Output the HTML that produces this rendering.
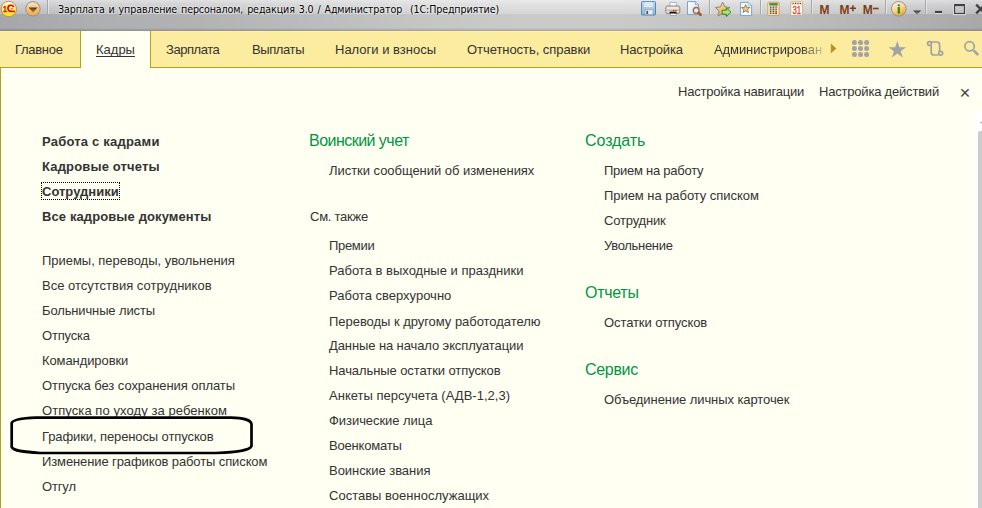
<!DOCTYPE html>
<html lang="ru"><head><meta charset="utf-8"><title>1С:Предприятие</title>
<style>
html,body{margin:0;padding:0;}
body{width:982px;height:508px;overflow:hidden;position:relative;background:#fffff2;font-family:"Liberation Sans",Arial,sans-serif;color:#333;}
.abs{position:absolute;white-space:nowrap;}
#title{left:0;top:0;width:982px;height:31px;background:linear-gradient(rgba(0,0,0,0) 0,rgba(0,0,0,0) 28px,rgba(10,10,30,.1) 29.5px,rgba(10,10,30,.22) 31px),linear-gradient(90deg,#a6a7ab 0,#aeafb1 10%,#b2b2b5 19%,#babbbc 31%,#c5c5c6 43%,#cacaca 53%,#cacaca 63%,#c1c1c1 76%,#b4b4b6 90%,#a8a8ab 100%);}
#gloss{left:0;top:0;width:982px;height:14px;background:linear-gradient(rgba(255,255,255,.6) 0,rgba(255,255,255,.42) 5px,rgba(255,255,255,.24) 14px);}
#ttext{left:58px;top:2px;word-spacing:1px;letter-spacing:-0.11px;font-family:"DejaVu Sans Condensed","Liberation Sans",sans-serif;font-size:10.6px;line-height:15px;color:#000;text-shadow:0 0 3px rgba(255,255,255,.9),0 0 2px rgba(255,255,255,.8);}
#nav{left:0;top:31px;width:982px;height:36px;background:linear-gradient(#fff2a4 0,#fff2a4 1px,#fcec9f 1px);border-bottom:1px solid #b9a019;}
.nv{font-size:13px;line-height:20px;color:#333;}
.u{text-decoration:underline;text-decoration-skip-ink:none;text-underline-offset:2px;text-decoration-thickness:1px;}
#tab{left:80px;top:31px;width:71px;height:37px;background:#fffff2;border-left:1px solid #b9a019;border-right:1px solid #b9a019;box-sizing:border-box;}
#lb{left:0;top:68px;width:1px;height:440px;background:#b9a019;border-right:1px solid #fff;}
#wl{left:1px;top:68px;width:973px;height:1px;background:#fffffa;}
.t{font-size:13px;line-height:20px;}
.b{font-weight:bold;font-size:13px;line-height:20px;}
.h{font-size:16px;line-height:20px;color:#009646;}
#focus{left:41px;top:182px;width:77px;height:16px;border:1px dotted #000;}
#sbw{left:974px;top:111px;width:8px;height:397px;background:#fff;}
#sbt{left:978px;top:131px;width:6px;height:380px;background:#ccc;border-radius:2px 0 0 0;}
#x{left:957px;top:83px;width:16px;height:20px;font-size:18.5px;line-height:20px;color:#444;text-align:center;}
</style></head><body>
<div class="abs" id="title"></div><div class="abs" id="gloss"></div>
<div class="abs" id="ttext">Зарплата и управление персоналом, редакция 3.0 / Администратор&nbsp; (1С:Предприятие)</div>
<div class="abs" id="nav"></div>
<div class="abs" id="tab"></div>
<div class="abs" id="lb"></div><div class="abs" id="wl"></div>

<div class="abs b" id="i0" style="left:42.00px;top:132px;letter-spacing:0.213px">Работа с кадрами</div>
<div class="abs b" id="i1" style="left:42.00px;top:157px;letter-spacing:0.156px">Кадровые отчеты</div>
<div class="abs b" id="i2" style="left:42.00px;top:182px;letter-spacing:0.000px">Сотрудники</div>
<div class="abs b" id="i3" style="left:42.00px;top:207px;letter-spacing:0.105px">Все кадровые документы</div>
<div class="abs t" id="i4" style="left:42.00px;top:251px;letter-spacing:-0.028px">Приемы, переводы, увольнения</div>
<div class="abs t" id="i5" style="left:42.00px;top:276px;letter-spacing:0.000px">Все отсутствия сотрудников</div>
<div class="abs t" id="i6" style="left:42.00px;top:301px;letter-spacing:-0.134px">Больничные листы</div>
<div class="abs t" id="i7" style="left:42.00px;top:326px;letter-spacing:-0.201px">Отпуска</div>
<div class="abs t" id="i8" style="left:42.00px;top:351px;letter-spacing:-0.091px">Командировки</div>
<div class="abs t" id="i9" style="left:42.00px;top:376px;letter-spacing:-0.065px">Отпуска без сохранения оплаты</div>
<div class="abs t" id="i10" style="left:42.00px;top:401px;letter-spacing:0.075px">Отпуска по уходу за ребенком</div>
<div class="abs t" id="i11" style="left:42.00px;top:427px;letter-spacing:-0.104px">Графики, переносы отпусков</div>
<div class="abs t" id="i12" style="left:42.00px;top:452px;letter-spacing:-0.111px">Изменение графиков работы списком</div>
<div class="abs t" id="i13" style="left:42.00px;top:477px;letter-spacing:-0.150px">Отгул</div>
<div class="abs t" id="i14" style="left:329.00px;top:161px;letter-spacing:-0.040px">Листки сообщений об изменениях</div>
<div class="abs t" id="i15" style="left:310.00px;top:207px;letter-spacing:-0.250px">См. также</div>
<div class="abs t" id="i16" style="left:329.00px;top:236px;letter-spacing:-0.320px">Премии</div>
<div class="abs t" id="i17" style="left:329.00px;top:261px;letter-spacing:0.000px">Работа в выходные и праздники</div>
<div class="abs t" id="i18" style="left:329.00px;top:286px;letter-spacing:-0.000px">Работа сверхурочно</div>
<div class="abs t" id="i19" style="left:329.00px;top:312px;letter-spacing:-0.039px">Переводы к другому работодателю</div>
<div class="abs t" id="i20" style="left:329.00px;top:336px;letter-spacing:-0.100px">Данные на начало эксплуатации</div>
<div class="abs t" id="i21" style="left:329.00px;top:361px;letter-spacing:-0.088px">Начальные остатки отпусков</div>
<div class="abs t" id="i22" style="left:329.00px;top:386px;letter-spacing:0.014px">Анкеты персучета (АДВ-1,2,3)</div>
<div class="abs t" id="i23" style="left:329.00px;top:411px;letter-spacing:-0.055px">Физические лица</div>
<div class="abs t" id="i24" style="left:329.00px;top:436px;letter-spacing:-0.180px">Военкоматы</div>
<div class="abs t" id="i25" style="left:329.00px;top:461px;letter-spacing:-0.045px">Воинские звания</div>
<div class="abs t" id="i26" style="left:329.00px;top:486px;letter-spacing:0.008px">Составы военнослужащих</div>
<div class="abs t" id="i27" style="left:604.00px;top:161px;letter-spacing:-0.258px">Прием на работу</div>
<div class="abs t" id="i28" style="left:604.00px;top:186px;letter-spacing:-0.053px">Прием на работу списком</div>
<div class="abs t" id="i29" style="left:604.00px;top:211px;letter-spacing:-0.175px">Сотрудник</div>
<div class="abs t" id="i30" style="left:604.00px;top:236px;letter-spacing:-0.310px">Увольнение</div>
<div class="abs t" id="i31" style="left:604.00px;top:313px;letter-spacing:-0.093px">Остатки отпусков</div>
<div class="abs t" id="i32" style="left:604.00px;top:390px;letter-spacing:-0.083px">Объединение личных карточек</div>
<div class="abs h" id="i33" style="left:309.00px;top:131px;letter-spacing:-0.534px">Воинский учет</div>
<div class="abs h" id="i34" style="left:585.00px;top:131px;letter-spacing:-0.068px">Создать</div>
<div class="abs h" id="i35" style="left:585.00px;top:283px;letter-spacing:-0.280px">Отчеты</div>
<div class="abs h" id="i36" style="left:585.00px;top:360px;letter-spacing:-0.320px">Сервис</div>
<div class="abs t" id="i37" style="left:678.00px;top:82px;letter-spacing:-0.200px">Настройка навигации</div>
<div class="abs t" id="i38" style="left:819.00px;top:82px;letter-spacing:-0.199px">Настройка действий</div>
<div class="abs nv" id="i39" style="left:15.00px;top:40px;letter-spacing:-0.298px">Главное</div>
<div class="abs nv u" id="i40" style="left:96.00px;top:40px;letter-spacing:0.000px">Кадры</div>
<div class="abs nv" id="i41" style="left:166.00px;top:40px;letter-spacing:-0.459px">Зарплата</div>
<div class="abs nv" id="i42" style="left:252.00px;top:40px;letter-spacing:-0.399px">Выплаты</div>
<div class="abs nv" id="i43" style="left:335.00px;top:40px;letter-spacing:0.000px">Налоги и взносы</div>
<div class="abs nv" id="i44" style="left:467.00px;top:40px;letter-spacing:-0.056px">Отчетность, справки</div>
<div class="abs nv" id="i45" style="left:620.00px;top:40px;letter-spacing:-0.125px">Настройка</div>
<div class="abs nv" style="left:714px;top:40px;width:108px;letter-spacing:-0.1px;overflow:hidden;-webkit-mask-image:linear-gradient(90deg,#000 80%,transparent 106%);mask-image:linear-gradient(90deg,#000 80%,transparent 106%)">Администрирование</div>
<div class="abs" id="focus"></div>
<div class="abs" id="x">×</div>
<div class="abs" id="sbw"></div><div class="abs" id="sbt"></div>
<svg class="abs" style="left:974px;top:111px" width="8" height="20" viewBox="0 0 8 20"><path d="M5.6 12.2L7.4 10.4L9.2 12.2Z" fill="#b0b0b0"/></svg>
<svg class="abs" style="left:0;top:400px" width="270" height="70" viewBox="0 400 270 70"><path d="M36 417.6L231 417.6C242 418 250.5 419.2 251.5 424L251.5 446C250 450 240 452 216 453L40 453C25 452 13 451 11.7 447L11.7 423C13 419 25 418 36 417.6Z" fill="none" stroke="#000" stroke-width="2.7"/></svg>
<svg class="abs" style="left:0;top:0" width="982" height="68" viewBox="0 0 982 68">
<defs>
<linearGradient id="gY" x1="0" y1="0" x2="0" y2="1"><stop offset="0" stop-color="#fffbe0"/><stop offset="0.45" stop-color="#fff27a"/><stop offset="1" stop-color="#ffe600"/></linearGradient>
<linearGradient id="gO" x1="0" y1="0" x2="0" y2="1"><stop offset="0" stop-color="#fde6c0"/><stop offset="0.5" stop-color="#f9c174"/><stop offset="1" stop-color="#f7a93a"/></linearGradient>
<linearGradient id="gT" x1="0" y1="0" x2="0" y2="1"><stop offset="0" stop-color="#4a3a20"/><stop offset="1" stop-color="#b08850"/></linearGradient>
<linearGradient id="gI" x1="0.2" y1="0" x2="0.7" y2="1"><stop offset="0" stop-color="#fff8e8"/><stop offset="0.5" stop-color="#fbd590"/><stop offset="1" stop-color="#f4a020"/></linearGradient>
<linearGradient id="gB" x1="0" y1="0" x2="0" y2="1"><stop offset="0" stop-color="#c4dcf2"/><stop offset="1" stop-color="#8fb4d8"/></linearGradient>
<linearGradient id="gP" x1="0" y1="0" x2="1" y2="1"><stop offset="0" stop-color="#ffffff"/><stop offset="1" stop-color="#cfe0f2"/></linearGradient>
<linearGradient id="gS" x1="0" y1="0" x2="0.6" y2="1"><stop offset="0" stop-color="#fff0c0"/><stop offset="1" stop-color="#f0a030"/></linearGradient>
<linearGradient id="gD" x1="0" y1="0" x2="0" y2="1"><stop offset="0" stop-color="#3a3a3a"/><stop offset="1" stop-color="#9a9a9a"/></linearGradient>
<linearGradient id="gC" x1="0" y1="0" x2="1" y2="1"><stop offset="0" stop-color="#fff3d8"/><stop offset="1" stop-color="#f9dca6"/></linearGradient>
</defs>
<!-- separators -->
<g stroke-width="1">
<path d="M47.5 0V14M709.5 0V14M760.5 0V14M811.5 0V14M885.5 0V14M925.5 0V14" stroke="#a8a8aa"/>
<path d="M48.5 0V14M710.5 0V14M761.5 0V14M812.5 0V14M886.5 0V14M926.5 0V14" stroke="#f2f2f2" stroke-opacity="0.6"/>
</g>
<!-- 1C logo -->
<circle cx="8.8" cy="9" r="7.7" fill="url(#gY)" stroke="#b98d6c" stroke-width="1"/>
<text x="2.9" y="12.1" font-family="Liberation Sans, sans-serif" font-weight="bold" font-size="8.6" fill="#e30c17" stroke="#e30c17" stroke-width="0.3" textLength="3.8" lengthAdjust="spacingAndGlyphs">1</text>
<path d="M13.7 7.1A3 3 0 1 0 10.9 11.3H14.8" fill="none" stroke="#e30c17" stroke-width="1.7"/>
<path d="M13 8.7A1.3 1.3 0 0 0 10.9 9.5" fill="none" stroke="#e30c17" stroke-width="0.7"/>
<!-- dropdown -->
<circle cx="32.9" cy="8.8" r="7.2" fill="url(#gO)" stroke="#8e8ea0" stroke-width="1"/>
<path d="M28.6 7.6H37.6L33.1 12.6Z" fill="url(#gT)"/>
<!-- floppy -->
<rect x="641.5" y="1.5" width="14" height="13.5" rx="1" fill="url(#gB)" stroke="#5585b0"/>
<rect x="644" y="2" width="9" height="5.2" fill="#f4f9fd" stroke="#9fc0dc" stroke-width="0.6"/>
<path d="M645 3.8H652M645 5.4H652" stroke="#b7d3e6" stroke-width="0.7"/>
<rect x="645" y="9.6" width="8" height="5" fill="#e9e9ec" stroke="#7f9fc0" stroke-width="0.6"/>
<rect x="646.3" y="10.8" width="1.8" height="3.2" fill="#4a5a78"/>
<!-- printer -->
<rect x="670" y="2.6" width="6.2" height="4.5" fill="#fdfdff" stroke="#8fb0d8" stroke-width="0.8"/>
<rect x="665.8" y="6" width="14" height="7.4" rx="1.8" fill="#f1e6dc" stroke="#7d7470" stroke-width="0.9"/>
<path d="M666.5 10.2H679" stroke="#c9a58f" stroke-width="1.2"/>
<rect x="669.6" y="11.6" width="7" height="2.2" fill="#151515"/>
<rect x="670.2" y="13.6" width="5.8" height="1.8" fill="#ffffff" stroke="#777" stroke-width="0.5"/>
<rect x="673" y="9.8" width="1.3" height="1.3" fill="#e02020"/><rect x="675.3" y="9.8" width="1.3" height="1.3" fill="#20a030"/>
<!-- preview -->
<path d="M687.5 1.6H695.6L698.6 4.6V14.6H687.5Z" fill="url(#gP)" stroke="#6f9bc8" stroke-width="0.9"/>
<path d="M695.4 1.8V4.8H698.4" fill="#e8f1fa" stroke="#6f9bc8" stroke-width="0.7"/>
<circle cx="696.2" cy="10.4" r="2.9" fill="#dbe9fb" stroke="#a8683a" stroke-width="1.3"/>
<path d="M698.6 12.9L700.6 14.8" stroke="#9a5a2a" stroke-width="2.6" stroke-linecap="round"/>
<!-- star arrow -->
<path d="M722.7 2.2L724.9 6.9L730 7.5L726.2 11L727.3 16L722.7 13.5L718.1 16L719.2 11L715.4 7.5L720.5 6.9Z" fill="url(#gS)" stroke="#858585" stroke-width="1" stroke-linejoin="round"/>
<path d="M722.2 10.2H726.4V8L731 12.2L726.4 16.4V14.2H722.2Z" fill="#a6e87c" stroke="#2a7d18" stroke-width="0.9" stroke-linejoin="round"/>
<!-- page star -->
<path d="M740.6 2.4H748.4L751.6 5.6V15.4H740.6Z" fill="#fbfdff" stroke="#6f9bc8" stroke-width="0.9"/>
<path d="M748.2 2.6V5.8H751.4" fill="#e8f1fa" stroke="#8fb2d6" stroke-width="0.7"/>
<path d="M745.7 4.6L746.9 7.4L749.9 7.6L747.6 9.5L748.4 12.5L745.7 10.9L743 12.5L743.8 9.5L741.5 7.6L744.5 7.4Z" fill="#f9c860" stroke="#6e6e6e" stroke-width="0.8" stroke-linejoin="round"/>
<!-- calculator -->
<rect x="767.8" y="2.2" width="11.4" height="13.2" rx="0.8" fill="url(#gC)" stroke="#c4935a" stroke-width="0.8"/>
<rect x="769.4" y="3.3" width="8.2" height="2" rx="0.5" fill="#3f9a32" stroke="#2a6a20" stroke-width="0.4"/>
<g fill="#2a2a2a"><rect x="769.8" y="6.6" width="1.7" height="1.1"/><rect x="772.6" y="6.6" width="1.7" height="1.1"/><rect x="769.8" y="8.6" width="1.7" height="1.1"/><rect x="772.6" y="8.6" width="1.7" height="1.1"/><rect x="775.4" y="8.6" width="1.4" height="1.1"/><rect x="769.8" y="10.6" width="1.7" height="1.1"/><rect x="772.6" y="10.6" width="1.7" height="1.1"/><rect x="775.4" y="10.6" width="1.4" height="1.1"/><rect x="769.8" y="12.6" width="1.7" height="1.1"/><rect x="772.6" y="12.6" width="1.7" height="1.1"/><rect x="775.4" y="12.4" width="1.4" height="1.6"/></g>
<rect x="775.4" y="6.2" width="1.4" height="1.6" fill="#e02818"/>
<!-- calendar -->
<rect x="790.8" y="1.8" width="11.8" height="13.6" rx="0.8" fill="#fffdf8" stroke="#c9a97c" stroke-width="0.9"/>
<rect x="791.3" y="2.3" width="10.8" height="3" fill="#f6dfae"/>
<g fill="#4a3a28"><rect x="792.6" y="2.9" width="1.1" height="1.1"/><rect x="795" y="2.9" width="1.1" height="1.1"/><rect x="797.4" y="2.9" width="1.1" height="1.1"/><rect x="799.8" y="2.9" width="1.1" height="1.1"/></g>
<text x="792.4" y="14" font-family="Liberation Sans, sans-serif" font-size="10.8" fill="#e8301c" stroke="#e8301c" stroke-width="0.25" textLength="8.8" lengthAdjust="spacingAndGlyphs">31</text>
<!-- M M+ M- -->
<g font-family="Liberation Sans, sans-serif" font-weight="bold" font-size="13.4" fill="#7c3f12">
<text x="819.4" y="13.8" textLength="10" lengthAdjust="spacingAndGlyphs">M</text>
<text x="839.6" y="13.8" textLength="10" lengthAdjust="spacingAndGlyphs">M</text>
<text x="862.8" y="13.8" textLength="10" lengthAdjust="spacingAndGlyphs">M</text>
</g>
<path d="M849.8 8.3H856M852.9 5.3V11.3" stroke="#7c3f12" stroke-width="1.6"/>
<path d="M873 8.5H878.6" stroke="#7c3f12" stroke-width="1.6"/>
<!-- info -->
<circle cx="898.8" cy="8.8" r="7.3" fill="url(#gI)" stroke="#8a8a94" stroke-width="0.9"/>
<rect x="897.7" y="4.2" width="2.2" height="2" rx="0.8" fill="#2f8a1a"/>
<rect x="897.7" y="7" width="2.2" height="6.6" fill="#2f8a1a"/>
<path d="M913 10.6H921.2L917.1 14.8Z" fill="url(#gD)"/>
<!-- window buttons -->
<path d="M935 13.6H942" stroke="#f2f2f2" stroke-width="1"/>
<path d="M935 12H942" stroke="#404040" stroke-width="2.2"/>
<rect x="953.6" y="4.6" width="11.6" height="10" fill="none" stroke="#efefef" stroke-width="1"/>
<rect x="954.5" y="5.5" width="10" height="8" fill="none" stroke="#404040" stroke-width="1.2"/>
<path d="M954 5H965" stroke="#404040" stroke-width="2"/>
<path d="M976.2 4.6L985 13.4M976.2 13.4L985 4.6" stroke="#404040" stroke-width="2.4"/>
<!-- nav icons -->
<path d="M830.9 43.6V53.2L836.3 48.4Z" fill="#b8921c"/>
<g fill="#a3a3a6">
<circle cx="854.4" cy="42.4" r="2.5"/><circle cx="860.5" cy="42.4" r="2.5"/><circle cx="866.6" cy="42.4" r="2.5"/>
<circle cx="854.4" cy="48.5" r="2.5"/><circle cx="860.5" cy="48.5" r="2.5"/><circle cx="866.6" cy="48.5" r="2.5"/>
<circle cx="854.4" cy="54.5" r="2.5"/><circle cx="860.5" cy="54.5" r="2.5"/><circle cx="866.6" cy="54.5" r="2.5"/>
<path d="M897.3 41L899.4 47.3L906 47.3L900.7 51.2L902.7 57.5L897.3 53.6L891.9 57.5L893.9 51.2L888.6 47.3L895.2 47.3Z"/>
</g>
<g fill="none" stroke="#a1a1a8" stroke-width="1.7">
<path d="M930.8 42H936.8Q939.6 42 939.6 44.8V51.6"/>
<path d="M938.6 55H934Q931.2 55 931.2 52.2V45.2"/>
<circle cx="929.5" cy="43.6" r="1.9" fill="#fcec9f"/>
<circle cx="940.7" cy="53.3" r="1.9" fill="#fcec9f"/>
<circle cx="969.6" cy="46.3" r="4.7" stroke-width="1.7"/>
</g>
<path d="M973.6 50.4L978.2 55" stroke="#a3a3a8" stroke-width="2.6"/>
</svg>

</body></html>
